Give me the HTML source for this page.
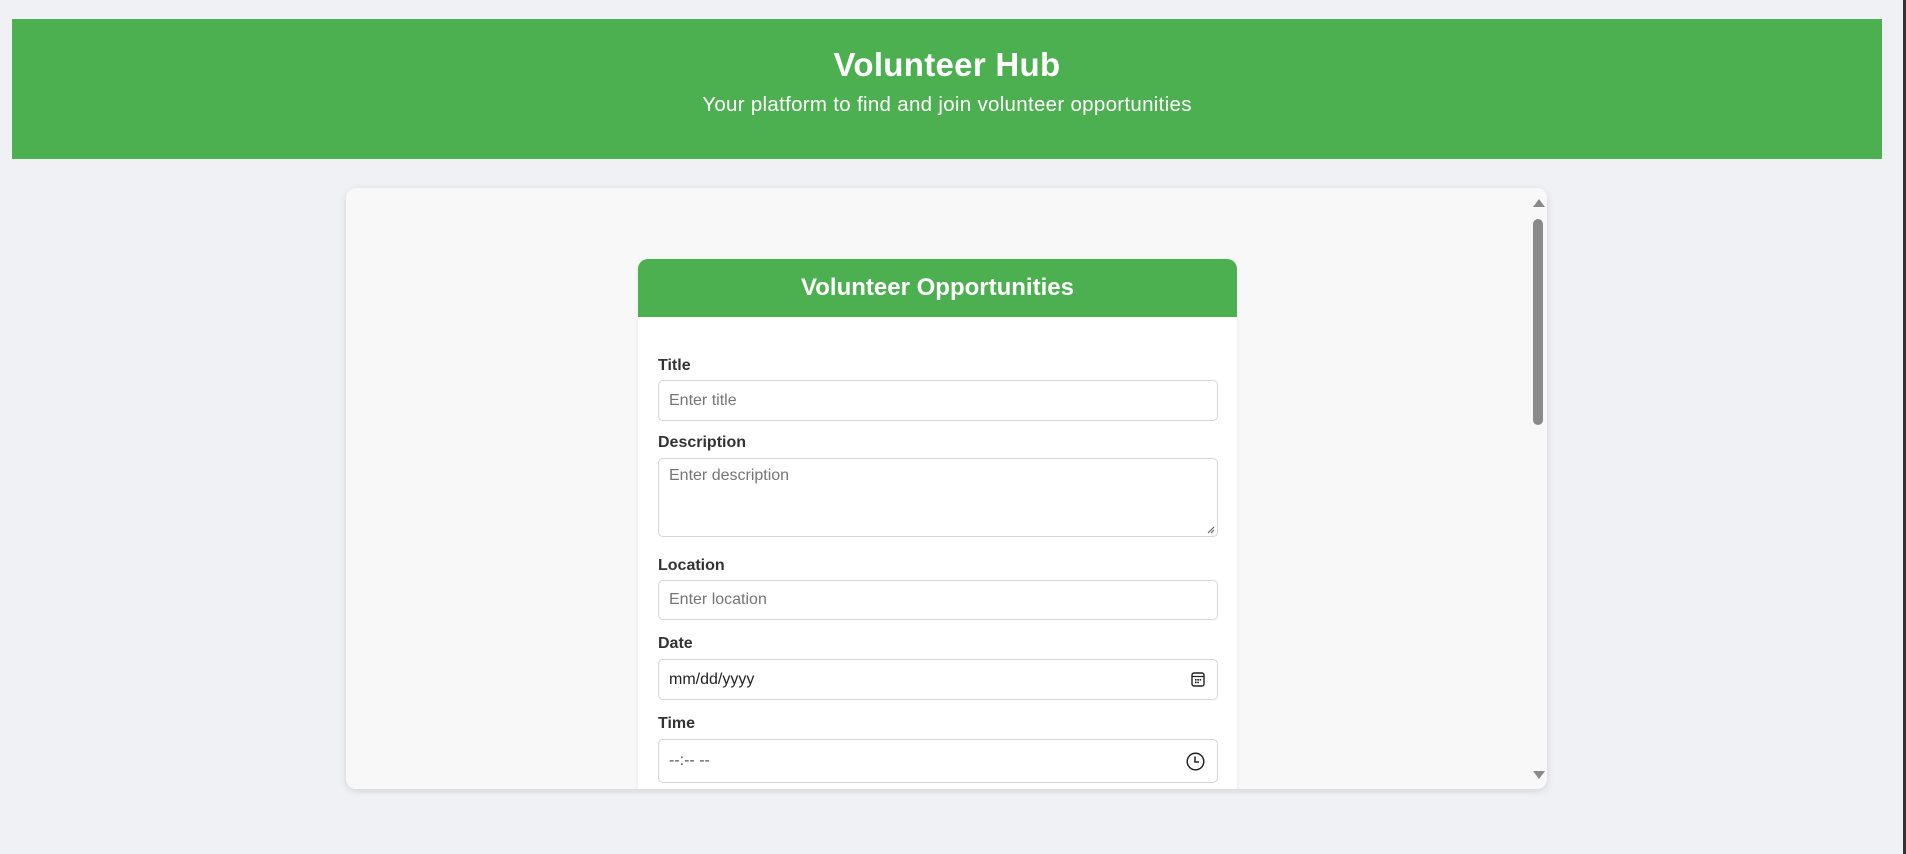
<!DOCTYPE html>
<html><head><meta charset="utf-8"><style>
*{box-sizing:border-box;margin:0;padding:0}
body{width:1906px;height:854px;background:#f0f1f5;position:relative;overflow:hidden;font-family:"Liberation Sans",Arial,sans-serif}
.edge{position:absolute;right:0;top:0;width:3px;height:854px;background:#333}
.hdr{position:absolute;left:12px;top:19px;width:1870px;height:140px;background:#4caf50;color:#fff;text-align:center}
.hdr h1{position:absolute;left:0;right:0;top:26px;font-size:33px;font-weight:bold;line-height:40px;letter-spacing:0.3px}
.hdr p{position:absolute;left:0;right:0;top:74px;font-size:20.5px;line-height:24px;letter-spacing:0.3px}
.wrap{position:absolute;left:346px;top:188px;width:1201px;height:601px;background:#f8f8f8;border-radius:10px;box-shadow:0 2px 8px rgba(0,0,0,0.12);overflow:hidden}
.sb{position:absolute;right:0;top:0;width:18px;height:100%;background:#f8f8f8}
.thumb{position:absolute;left:4px;top:31px;width:10px;height:206px;border-radius:5px;background:#8a8a8a}
.up,.dn{position:absolute;left:4px;width:0;height:0;border-left:6px solid transparent;border-right:6px solid transparent}
.up{top:11px;border-bottom:8px solid #8a8a8a}
.dn{bottom:10px;border-top:8px solid #8a8a8a}
.card{position:absolute;left:292px;top:71px;width:599px;height:600px;background:#fff;border-radius:10px 10px 0 0;box-shadow:0 0 6px rgba(0,0,0,0.06)}
.ch{height:58px;background:#4caf50;border-radius:10px 10px 0 0;color:#fff;text-align:center;font-size:24px;font-weight:bold;line-height:58px}
.lbl{position:absolute;left:20px;font-size:16px;font-weight:bold;color:#333}
.in{position:absolute;left:20px;width:560px;border:1px solid #d6d6d6;border-radius:5px;background:#fff;font-size:16px;color:#757575;padding-left:10px}
</style></head><body>
<div class="edge"></div>
<div class="hdr"><h1>Volunteer Hub</h1><p>Your platform to find and join volunteer opportunities</p></div>
<div class="wrap">
 <div class="card">
  <div class="ch">Volunteer Opportunities</div>
  <div class="lbl" style="top:98px">Title</div>
  <div class="in" style="top:121px;height:41px;line-height:39px">Enter title</div>
  <div class="lbl" style="top:175px">Description</div>
  <div class="in" style="top:199px;height:79px;padding-top:8px">Enter description
   <svg style="position:absolute;right:2px;bottom:2px" width="8" height="8"><path d="M7 1L1 7M7 4L4 7" stroke="#555" stroke-width="1"/></svg></div>
  <div class="lbl" style="top:298px">Location</div>
  <div class="in" style="top:321px;height:40px;line-height:38px">Enter location</div>
  <div class="lbl" style="top:376px">Date</div>
  <div class="in" style="top:400px;height:41px;line-height:39px;color:#222">mm/dd/yyyy
   <svg style="position:absolute;right:12px;top:12px" width="14" height="15" viewBox="0 0 14 15"><rect x="1" y="1" width="12" height="13" rx="2" fill="none" stroke="#222" stroke-width="1.4"/><path d="M1 4.5H13" stroke="#222" stroke-width="1.2"/><rect x="4" y="7" width="1.6" height="1.6" fill="#222"/><rect x="6.3" y="7" width="1.6" height="1.6" fill="#222"/><rect x="8.6" y="7" width="1.6" height="1.6" fill="#222"/><rect x="4" y="9.6" width="1.6" height="1.6" fill="#222"/><rect x="6.3" y="9.6" width="1.6" height="1.6" fill="#222"/></svg></div>
  <div class="lbl" style="top:456px">Time</div>
  <div class="in" style="top:480px;height:44px;line-height:42px;color:#555">--:-- --
   <svg style="position:absolute;right:12px;top:12px" width="19" height="19" viewBox="0 0 19 19"><circle cx="9.5" cy="9.5" r="8.3" fill="none" stroke="#222" stroke-width="1.5"/><path d="M9 4.5V10H13" fill="none" stroke="#222" stroke-width="1.5"/></svg></div>
 </div>
 <div class="sb"><div class="up"></div><div class="thumb"></div><div class="dn"></div></div>
</div>
</body></html>
